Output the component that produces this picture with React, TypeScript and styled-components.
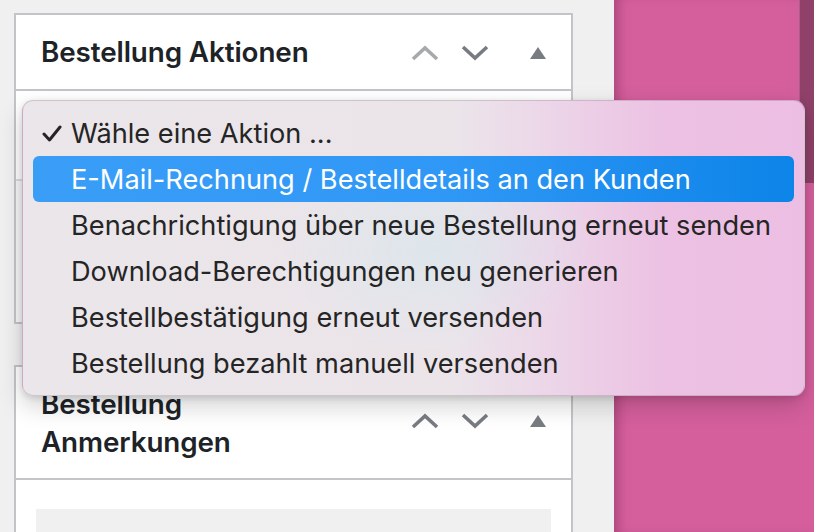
import styled, { createGlobalStyle } from 'styled-components';

const GlobalStyle = createGlobalStyle`
  html, body {
    margin: 0;
    padding: 0;
  }
  body {
    font-family: Inter, "Noto Sans", sans-serif;
  }
`;

const Screen = styled.div`
  position: relative;
  width: 814px;
  height: 532px;
  overflow: hidden;
  display: flex;
`;

const Admin = styled.div`
  width: 614px;
  background: #f0f0f1;
  padding: 13px 0 0 14px;
  box-sizing: border-box;
  display: flex;
  flex-direction: column;
  gap: 41px;
`;

const Panel = styled.div<{ $height: number }>`
  width: 559px;
  height: ${(p) => p.$height}px;
  box-sizing: border-box;
  background: #fff;
  border: 2px solid #c3c4c7;
  display: flex;
  flex-direction: column;
  flex-shrink: 0;
`;

const PanelHead = styled.div<{ $height: number }>`
  height: ${(p) => p.$height}px;
  box-sizing: border-box;
  border-bottom: 2px solid #c3c4c7;
  display: flex;
  align-items: center;
  padding: 0 24px 0 25px;
  flex-shrink: 0;
`;

const Title = styled.h2`
  flex: 1;
  margin: 0;
  font-size: 27.8px;
  font-weight: 600;
  line-height: 38px;
  color: #1d2327;
  letter-spacing: -0.1px;
`;

const Handles = styled.div<{ $offset: number }>`
  display: flex;
  align-items: center;
  gap: 22px;
  margin-top: ${(p) => p.$offset}px;
`;

const HandleIcon = styled.svg`
  display: block;
`;

const PanelBody = styled.div`
  flex: 1;
  display: flex;
  flex-direction: column;
`;

const SelectRow = styled.div`
  height: 88px;
  border-bottom: 2px solid #dcdcde;
`;

const Footer = styled.div`
  flex: 1;
  background: #f6f7f7;
`;

const NotesBody = styled.div`
  flex: 1;
  padding: 29px 20px 0 20px;
`;

const NoteBox = styled.div`
  height: 100%;
  background: #f0f0f1;
`;

const Wallpaper = styled.div`
  flex: 1;
  background: #d55f9d;
  box-shadow: inset 10px 0 12px -6px rgba(90, 20, 60, 0.35);
  display: flex;
  justify-content: flex-end;
`;

const WindowEdge = styled.div`
  width: 14px;
  height: 183px;
  background: #8f4169;
  border-left: 1px solid #a8608a;
  border-bottom-left-radius: 7px;
`;

const Menu = styled.ul`
  position: absolute;
  left: 22px;
  top: 100px;
  width: 783px;
  height: 296px;
  box-sizing: border-box;
  margin: 0;
  padding: 9px 10px;
  list-style: none;
  border-radius: 11px;
  border: 1px solid rgba(120, 100, 120, 0.25);
  background:
    radial-gradient(ellipse 160px 100px at 410px 150px, rgba(210, 230, 236, 0.55), rgba(210, 230, 236, 0) 100%),
    linear-gradient(90deg, #ebe6ea 0%, #ebe5ea 55%, #ecd5e8 68%, #ecc1e3 82%, #ecbee3 100%);
  box-shadow: 0 10px 24px rgba(0, 0, 0, 0.18), 0 2px 6px rgba(0, 0, 0, 0.12);
`;

const Item = styled.li<{ $active?: boolean }>`
  height: 46px;
  display: flex;
  align-items: center;
  padding-left: 38px;
  position: relative;
  border-radius: 6px;
  font-size: 27.2px;
  color: ${(p) => (p.$active ? '#fff' : '#252525')};
  background: ${(p) =>
    p.$active ? 'linear-gradient(90deg, #3a9ef7 0%, #2f97f6 55%, #0d84e8 100%)' : 'transparent'};
  white-space: nowrap;
`;

const Check = styled.svg`
  position: absolute;
  left: 9px;
  top: 15px;
`;

const ChevronUp = ({ color }: { color: string }) => (
  <HandleIcon width="28" height="16" viewBox="0 0 28 16">
    <polyline points="2,14 14,3 26,14" fill="none" stroke={color} strokeWidth="3.6" />
  </HandleIcon>
);

const ChevronDown = ({ color }: { color: string }) => (
  <HandleIcon width="28" height="16" viewBox="0 0 28 16">
    <polyline points="2,2 14,13 26,2" fill="none" stroke={color} strokeWidth="3.6" />
  </HandleIcon>
);

const Toggle = () => (
  <HandleIcon width="18" height="14" viewBox="0 0 18 14" style={{ marginLeft: 18 }}>
    <polygon points="1,13 9,1 17,13" fill="#787c82" />
  </HandleIcon>
);

const actions = [
  'E-Mail-Rechnung / Bestelldetails an den Kunden',
  'Benachrichtigung über neue Bestellung erneut senden',
  'Download-Berechtigungen neu generieren',
  'Bestellbestätigung erneut versenden',
  'Bestellung bezahlt manuell versenden',
];

export default function App() {
  return (
    <Screen>
      <GlobalStyle />
      <Admin>
        <Panel $height={311}>
          <PanelHead $height={76}>
            <Title>Bestellung Aktionen</Title>
            <Handles $offset={2}>
              <ChevronUp color="#a7aaad" />
              <ChevronDown color="#787c82" />
              <Toggle />
            </Handles>
          </PanelHead>
          <PanelBody>
            <SelectRow />
            <Footer />
          </PanelBody>
        </Panel>
        <Panel $height={200}>
          <PanelHead $height={113}>
            <Title>
              Bestellung
              <br />
              Anmerkungen
            </Title>
            <Handles $offset={-4}>
              <ChevronUp color="#787c82" />
              <ChevronDown color="#787c82" />
              <Toggle />
            </Handles>
          </PanelHead>
          <NotesBody>
            <NoteBox />
          </NotesBody>
        </Panel>
      </Admin>
      <Wallpaper>
        <WindowEdge />
      </Wallpaper>
      <Menu>
        <Item>
          <Check width="20" height="18" viewBox="0 0 20 18">
            <polyline points="2,9 7.5,15 18,2" fill="none" stroke="#252525" strokeWidth="3" strokeLinejoin="round" strokeLinecap="round" />
          </Check>
          Wähle eine Aktion ...
        </Item>
        {actions.map((a, i) => (
          <Item key={a} $active={i === 0}>
            {a}
          </Item>
        ))}
      </Menu>
    </Screen>
  );
}
